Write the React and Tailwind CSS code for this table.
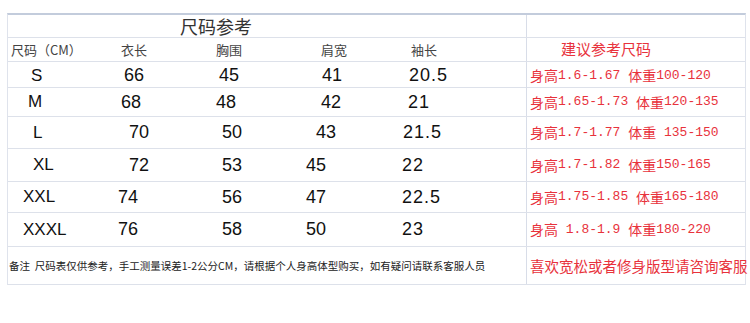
import React from 'react';

const rows = [
  {
    h: 'h-[26px]',
    cells: [['pl-[23px]', 'S'], ['pl-[16px]', '66'], ['pl-[21px]', '45'], ['pl-[24px]', '41'], ['pl-[16px]', '20.5']],
    tip: ['1.6-1.67 ', '100-120'],
  },
  {
    h: 'h-[29px]',
    cells: [['pl-[20px]', 'M'], ['pl-[13px]', '68'], ['pl-[18px]', '48'], ['pl-[23px]', '42'], ['pl-[15px]', '21']],
    tip: ['1.65-1.73 ', '120-135'],
  },
  {
    h: 'h-[32px]',
    cells: [['pl-[25px]', 'L'], ['pl-[21px]', '70'], ['pl-[24px]', '50'], ['pl-[18px]', '43'], ['pl-[10px]', '21.5']],
    tip: ['1.7-1.77 ', ' 135-150'],
  },
  {
    h: 'h-[33px]',
    cells: [['pl-[25px]', 'XL'], ['pl-[21px]', '72'], ['pl-[24px]', '53'], ['pl-[8px]', '45'], ['pl-[9px]', '22']],
    tip: ['1.7-1.82 ', '150-165'],
  },
  {
    h: 'h-[31px]',
    cells: [['pl-[15px]', 'XXL'], ['pl-[10px]', '74'], ['pl-[24px]', '56'], ['pl-[8px]', '47'], ['pl-[9px]', '22.5']],
    tip: ['1.75-1.85 ', '165-180'],
  },
  {
    h: 'h-[34px]',
    cells: [['pl-[15px]', 'XXXL'], ['pl-[10px]', '76'], ['pl-[24px]', '58'], ['pl-[8px]', '50'], ['pl-[9px]', '23']],
    tip: [' 1.8-1.9 ', '180-220'],
  },
];

const cols = 'grid grid-cols-[100px_90px_100px_95px_133px] items-center h-full';
const row = 'grid grid-cols-[518px_219px] border-b border-[#dde1ea]';
const cjk = { fontFamily: '"Noto Sans CJK SC", sans-serif' };

function Cn({ children }) {
  return <span className="text-[14px] font-['Noto_Sans_CJK_SC',sans-serif]">{children}</span>;
}

export default function App() {
  return (
    <div className="w-[750px] h-[323px] bg-white pt-[13px] pl-[7px] font-['Liberation_Sans','Noto_Sans_CJK_SC',sans-serif]">
      <div className="w-[739px] border-t-2 border-t-[#c3ccdc] border-x border-x-[#dfe3ec]">
        <div className={`${row} h-[23px]`}>
          <div className="flex items-center pl-[172px] text-[18px] text-[#333] font-['Noto_Sans_CJK_SC',sans-serif] leading-none">
            尺码参考
          </div>
          <div className="border-l border-[#d8dde8]" />
        </div>

        <div className={`${row} h-[24px]`}>
          <div className={`${cols} text-[13px] text-[#444] font-['Noto_Sans_CJK_SC',sans-serif]`}>
            <span className="pl-[3px]">尺码（CM）</span>
            <span className="pl-[13px]">衣长</span>
            <span className="pl-[18px]">胸围</span>
            <span className="pl-[23px]">肩宽</span>
            <span className="pl-[18px]">袖长</span>
          </div>
          <div className="flex items-center border-l border-[#d8dde8] pl-[34px] text-[15px] text-[#e8323c] font-['Noto_Sans_CJK_SC',sans-serif]">
            建议参考尺码
          </div>
        </div>

        {rows.map((r, i) => (
          <div key={i} className={`${row} ${r.h}`}>
            <div className={`${cols} text-[18px] text-[#111]`}>
              {r.cells.map(([pl, v], j) => (
                <span key={j} className={`${pl} ${j === 4 ? 'tracking-[1px]' : ''} ${j === 0 ? 'text-[17px]' : ''}`}>
                  {v}
                </span>
              ))}
            </div>
            <div className="flex items-center border-l border-[#d8dde8] pl-[3px] text-[13px] text-[#e8323c] font-['Liberation_Mono',monospace] whitespace-pre">
              <Cn>身高</Cn>
              {r.tip[0]}
              <Cn>体重</Cn>
              {r.tip[1]}
            </div>
          </div>
        ))}

        <div className={`${row} h-[38px]`}>
          <div className="flex items-center pl-[1px] text-[10.5px] text-[#222] whitespace-nowrap" style={cjk}>
            备注&nbsp;&nbsp;尺码表仅供参考，手工测量误差1-2公分CM，请根据个人身高体型购买，如有疑问请联系客服人员
          </div>
          <div className="flex items-center border-l border-[#d8dde8] pl-[3px] text-[14.5px] text-[#e8323c] whitespace-nowrap" style={cjk}>
            喜欢宽松或者修身版型请咨询客服
          </div>
        </div>
      </div>
    </div>
  );
}
